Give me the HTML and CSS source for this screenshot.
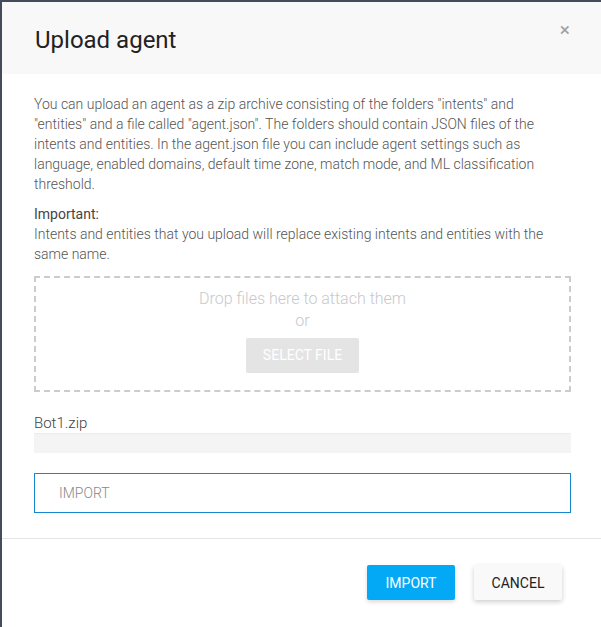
FILE: index.html
```html
<!DOCTYPE html>
<html>
<head>
<meta charset="utf-8">
<link rel="stylesheet" href="styles.css">
</head>
<body>
<div class="backdrop">
  <div class="modal">
    <div class="header">
      <h1 class="title">Upload agent</h1>
      <span class="close">&times;</span>
    </div>
    <div class="body">
      <p class="desc">You can upload an agent as a zip archive consisting of the folders "intents" and "entities" and a file called "agent.json". The folders should contain JSON files of the intents and entities. In the agent.json file you can include agent settings such as language, enabled domains, default time zone, match mode, and ML classification threshold.</p>
      <p class="important"><span class="label">Important:</span><br>Intents and entities that you upload will replace existing intents and entities with the same name.</p>
      <div class="dropzone">
        <div class="drop-text">Drop files here to attach them</div>
        <div class="drop-or">or</div>
        <div class="select-btn">SELECT FILE</div>
      </div>
      <div class="filename">Bot1.zip</div>
      <div class="progress"></div>
      <div class="import-input">IMPORT</div>
    </div>
    <div class="footer">
      <button class="btn btn-primary">IMPORT</button>
      <button class="btn btn-default">CANCEL</button>
    </div>
  </div>
</div>
</body>
</html>
```
FILE: styles.css
```css
html, body {
  margin: 0;
  padding: 0;
  height: 100%;
}
body {
  background: #454b5b;
  font-family: Roboto, "Liberation Sans", sans-serif;
  overflow: hidden;
}
.backdrop {
  padding: 2px 0 0 2px;
  height: 100%;
  box-sizing: border-box;
}
.modal {
  background: #fff;
  height: 100%;
  display: flex;
  flex-direction: column;
}
.header {
  background: #f8f8f8;
  height: 72px;
  display: flex;
  align-items: flex-start;
  justify-content: space-between;
  padding: 0 31px 0 33px;
  box-sizing: border-box;
}
.title {
  margin: 24px 0 0 0;
  font-size: 24px;
  line-height: 28px;
  font-weight: 400;
  color: #222;
}
.close {
  margin-top: 17px;
  font-size: 19px;
  line-height: 22px;
  color: #a0a0a0;
}
.body {
  padding: 20px 30px 0 32px;
  color: #555;
  font-size: 14px;
  line-height: 20px;
  font-weight: 300;
}
.desc {
  margin: 0;
  padding-right: 14px;
}
.important {
  margin: 10px 0 0 0;
  padding-right: 14px;
}
.label {
  font-weight: 400;
  color: #444;
}
.dropzone {
  margin-top: 12px;
  border: 2px dashed #ccc;
  height: 116px;
  box-sizing: border-box;
  display: flex;
  flex-direction: column;
  align-items: center;
  padding-top: 10px;
}
.drop-text {
  font-size: 16px;
  line-height: 22px;
  color: #c8c8cc;
}
.drop-or {
  font-size: 16px;
  line-height: 22px;
  color: #c8c8cc;
}
.select-btn {
  margin-top: 6px;
  background: #e4e4e4;
  color: #fff;
  font-size: 14px;
  font-weight: 400;
  width: 113px;
  height: 35px;
  line-height: 35px;
  text-align: center;
  border-radius: 2px;
}
.filename {
  margin-top: 21px;
  font-size: 15px;
  line-height: 20px;
  color: #444;
  font-weight: 300;
}
.progress {
  height: 20px;
  background: #f4f4f4;
  border-top: 1px solid #ececec;
  box-sizing: border-box;
}
.import-input {
  margin-top: 20px;
  height: 40px;
  border: 1px solid #1787d3;
  box-sizing: border-box;
  padding-left: 24px;
  line-height: 38px;
  font-size: 14px;
  color: #888;
}
.footer {
  margin-top: 25px;
  border-top: 1px solid #e4e4e4;
  display: flex;
  justify-content: flex-end;
  gap: 19px;
  padding: 26px 39px 0 0;
}
.btn {
  border: none;
  height: 35px;
  width: 88px;
  font-family: Roboto, "Liberation Sans", sans-serif;
  font-size: 14px;
  font-weight: 400;
  border-radius: 2px;
  padding: 0;
}
.btn-primary {
  background: #03a9f4;
  color: #fff;
  box-shadow: 0 2px 4px rgba(0,0,0,0.15);
}
.btn-default {
  background: #f9f9f9;
  color: #222;
  box-shadow: 0 2px 5px rgba(0,0,0,0.2);
}
```
